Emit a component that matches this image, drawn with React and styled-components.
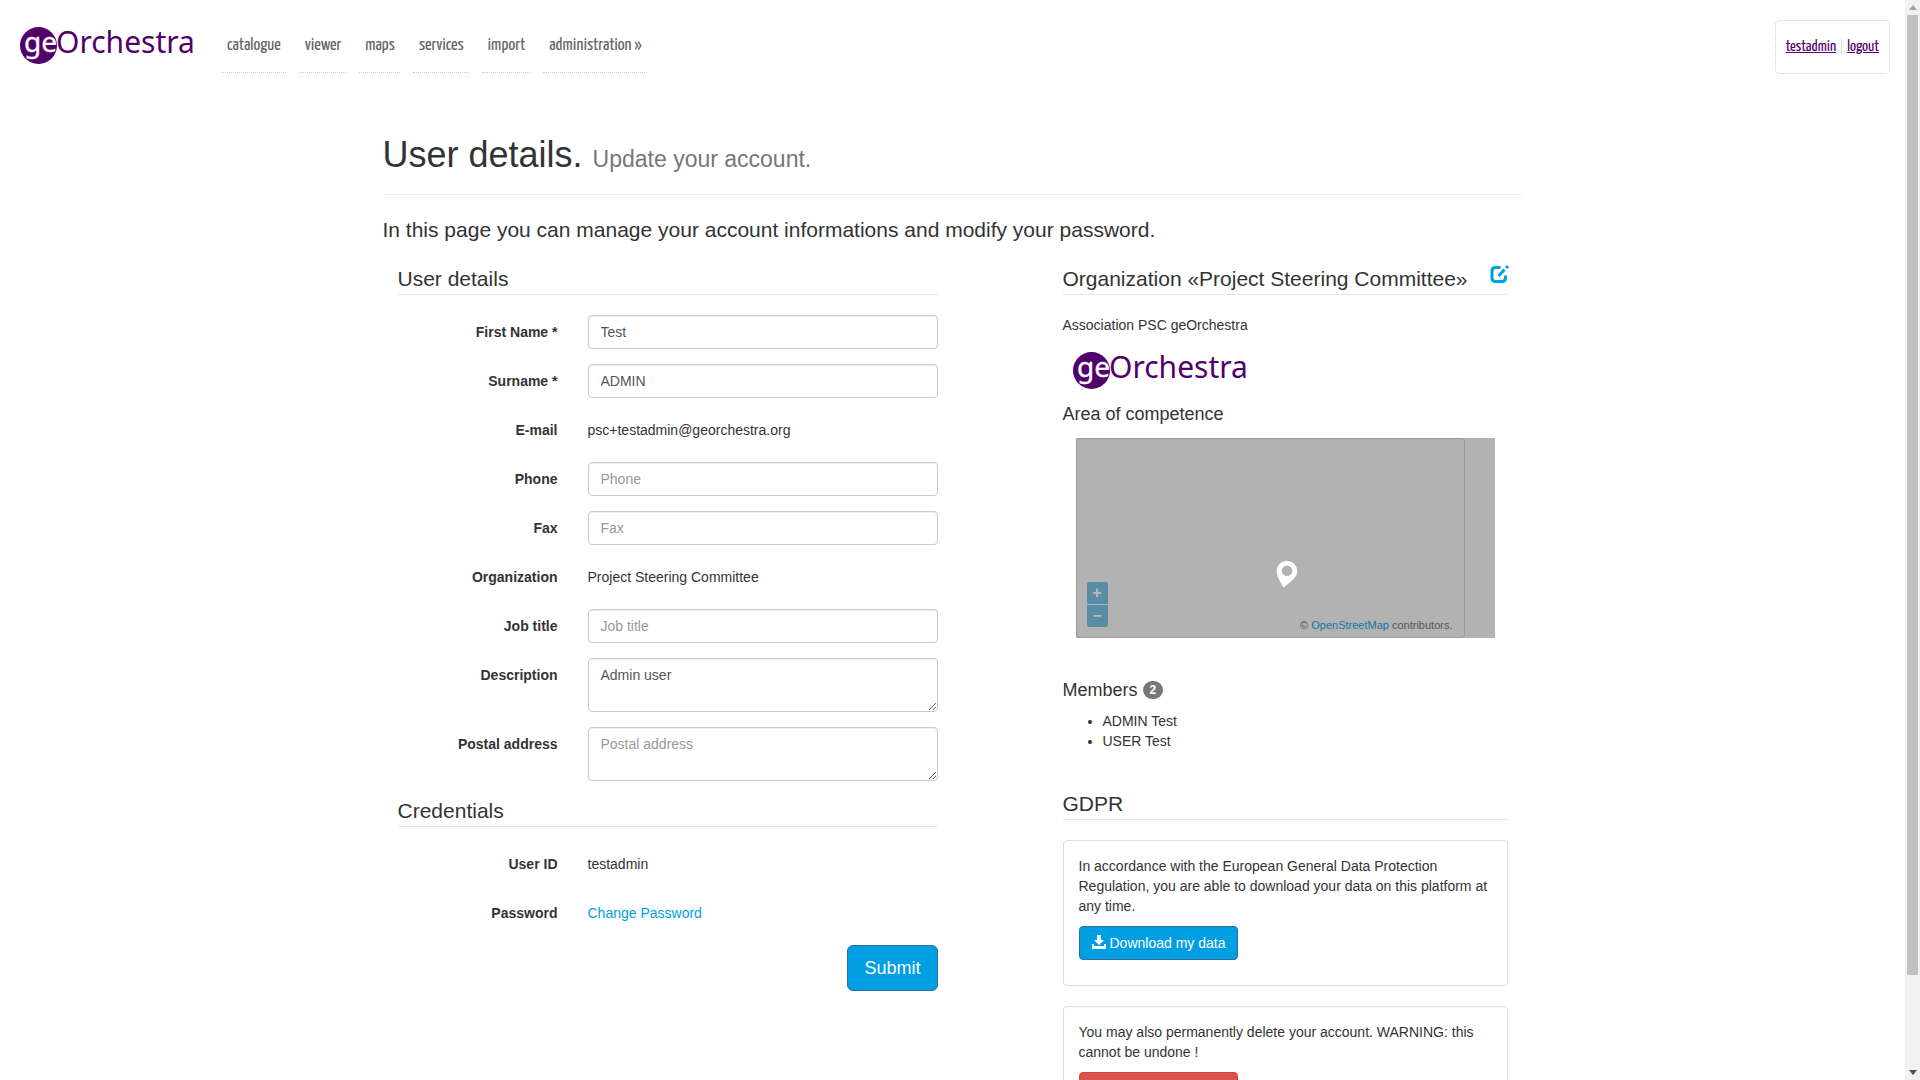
import React from "react";
import styled, { createGlobalStyle } from "styled-components";

const accent = "#009fe3";
const purple = "#52006b";
const narrow = '"Yanone Kaffeesatz", "Liberation Sans Narrow", "DejaVu Sans Condensed", sans-serif';

const GlobalStyle = createGlobalStyle`
  *, *::before, *::after { box-sizing: border-box; }
  body {
    margin: 0;
    font: 14px/20px "Liberation Sans", Arial, sans-serif;
    color: #333;
    background: #fff;
  }
  a { color: ${accent}; text-decoration: none; }
  input, textarea, button { font-family: inherit; }
`;

const Shell = styled.div`
  display: grid;
  grid-template-columns: minmax(0, 1fr) 15px;
  height: 100vh;
`;

const Page = styled.div`
  overflow-y: auto;
  scrollbar-width: none;
`;

const Track = styled.div`
  display: flex;
  flex-direction: column;
  align-items: center;
  gap: 4px;
  padding: 5px 0;
  background: #f1f1f1;
`;

const Rail = styled.div`
  display: grid;
  grid-template-rows: 32fr 3fr;
  flex: 1;
  width: 11px;
`;

const Thumb = styled.div`
  background: #c1c1c1;
`;

const Arrow = styled.svg`
  display: block;
  width: 8px;
  height: 6px;
  fill: ${(p) => p.$color};
`;

const Header = styled.header`
  display: flex;
  align-items: flex-start;
  justify-content: space-between;
  padding: 20px 15px 0 20px;
  height: 95px;
`;

const HeaderLeft = styled.div`
  display: flex;
  align-items: flex-start;
  gap: 25px;
`;

const LogoSvg = styled.svg`
  display: block;
  width: 176px;
  height: 49px;
`;

const Nav = styled.nav`
  display: flex;
  gap: 13px;
`;

const NavLink = styled.a`
  padding: 16px 5px 16px 6px;
  border-bottom: 1px dotted #ccc;
  font: 18px/20px ${narrow};
  color: #666;
`;

const Session = styled.p`
  display: flex;
  align-items: center;
  gap: 5px;
  height: 54px;
  margin: 0;
  padding: 0 10px;
  border: 1px dotted #ccc;
  border-radius: 5px;
  font: 16px/16px ${narrow};
`;

const SessionLink = styled.a`
  color: ${purple};
  text-decoration: underline;
`;

const Divider = styled.span`
  width: 1px;
  height: 16px;
  background: #ddd;
`;

const Container = styled.main`
  max-width: 1140px;
  margin: 0 auto;
  padding: 40px 0 20px;
`;

const Title = styled.h1`
  margin: 0 0 20px;
  padding-bottom: 19px;
  border-bottom: 1px solid #eee;
  font-size: 36px;
  line-height: 40px;
  font-weight: normal;
`;

const Small = styled.small`
  font-size: 23px;
  line-height: 1;
  color: #777;
`;

const Lead = styled.p`
  margin: 0 0 20px;
  font-size: 21px;
  line-height: 29px;
`;

const Columns = styled.div`
  display: grid;
  grid-template-columns: 6fr 5fr;
  column-gap: 95px;
  align-items: start;
`;

const Column = styled.section`
  padding: 0 15px;
`;

const Legend = styled.h2`
  display: flex;
  justify-content: space-between;
  margin: 0 0 20px;
  border-bottom: 1px solid #e5e5e5;
  font-size: 21px;
  line-height: 30px;
  font-weight: normal;
`;

const Row = styled.div`
  display: grid;
  grid-template-columns: 160px minmax(0, 1fr);
  column-gap: 30px;
  margin-bottom: 15px;
`;

const labelText = `
  padding-top: 7px;
  text-align: right;
  font-weight: bold;
`;

const Label = styled.label`${labelText}`;
const Term = styled.span`${labelText}`;

const Value = styled.div`
  min-height: 34px;
  padding: 7px 0;
`;

const Input = styled.input`
  display: block;
  width: 100%;
  height: ${(p) => (p.$tall ? 54 : 34)}px;
  padding: 6px 12px;
  border: 1px solid #ccc;
  border-radius: 4px;
  box-shadow: inset 0 1px 1px rgba(0, 0, 0, 0.075);
  background: #fff;
  color: #555;
  font-size: 14px;
  line-height: 20px;
  &::placeholder { color: #999; opacity: 1; }
`;

const Actions = styled.div`
  display: flex;
  justify-content: flex-end;
`;

const Button = styled.button`
  padding: ${(p) => (p.$large ? "10px 16px" : "6px 12px")};
  border: 1px solid ${(p) => (p.$danger ? "#d43f3a" : "#2e6da4")};
  border-radius: ${(p) => (p.$large ? 6 : 4)}px;
  background: ${(p) => (p.$danger ? "#d9534f" : accent)};
  color: #fff;
  font-size: ${(p) => (p.$large ? 18 : 14)}px;
  line-height: ${(p) => (p.$large ? 24 : 20)}px;
  cursor: pointer;
`;

const ButtonIcon = styled.svg`
  width: 14px;
  height: 14px;
  margin-right: 4px;
  vertical-align: -1px;
  fill: currentColor;
`;

const EditLink = styled.a`
  line-height: 0;
  svg { width: 19px; height: 19px; overflow: visible; }
`;

const OrgLogo = styled.div`
  padding-left: 10px;
`;

const Paragraph = styled.p`
  margin: 0 0 10px;
`;

const SubHeading = styled.h3`
  display: flex;
  align-items: center;
  gap: 5px;
  margin: 10px 0 11px;
  font-size: 18px;
  line-height: 20px;
  font-weight: normal;
`;

const Badge = styled.span`
  padding: 3px 7px;
  border-radius: 10px;
  background: #777;
  color: #fff;
  font-size: 12px;
  line-height: 12px;
  font-weight: bold;
`;

const MapBox = styled.div`
  position: relative;
  height: 200px;
  margin: 14px 13px 42px;
  background: #b2b2b2;
`;

const MapFrame = styled.div`
  display: flex;
  align-items: flex-end;
  justify-content: space-between;
  width: 389px;
  max-width: 100%;
  height: 100%;
  padding: 10px;
  border: 1px solid #999;
  border-radius: 4px;
`;

const Zoom = styled.div`
  display: grid;
  gap: 1px;
`;

const ZoomButton = styled.button`
  width: 21px;
  height: 22px;
  padding: 0;
  border: 0;
  border-radius: ${(p) => (p.$top ? "2px 2px 0 0" : "0 0 2px 2px")};
  background: #5b8ca6;
  color: #bbb;
  font-size: 16px;
  line-height: 20px;
  font-weight: bold;
`;

const Credit = styled.span`
  margin: 0 1px -6px 0;
  font-size: 11px;
  line-height: 16px;
  color: #555;
  a { color: #1575a3; }
`;

const Pin = styled.svg`
  position: absolute;
  left: 50%;
  top: 122px;
  width: 22px;
  height: 28px;
  margin-left: -9px;
  fill: #fff;
`;

const Members = styled.ul`
  margin: 0 0 38px;
  padding-left: 40px;
`;

const Panel = styled.div`
  margin-bottom: 20px;
  padding: 15px 15px 25px;
  border: 1px solid #ddd;
  border-radius: 4px;
  box-shadow: 0 1px 1px rgba(0, 0, 0, 0.05);
`;

function Logo() {
  return (
    <LogoSvg viewBox="0 0 176 49" role="img" aria-label="geOrchestra">
      <circle cx="18.5" cy="25.5" r="18.5" fill={purple} />
      <text x="4" y="32" fontFamily="Noto Sans, sans-serif" fontSize="28" fill="#fff" stroke="#fff" strokeWidth="0.3">ge</text>
      <text x="36" y="33" fontFamily="Noto Sans, sans-serif" fontSize="30" fill={purple}>Orchestra</text>
    </LogoSvg>
  );
}

const links = ["catalogue", "viewer", "maps", "services", "import", "administration »"];

function Field({ id, label, value, area, hint }) {
  return (
    <Row>
      <Label htmlFor={id}>{label}</Label>
      <Input id={id} as={area ? "textarea" : undefined} $tall={area} defaultValue={value} placeholder={hint} />
    </Row>
  );
}

function Fact({ label, children }) {
  return (
    <Row>
      <Term>{label}</Term>
      <Value>{children}</Value>
    </Row>
  );
}

export default function App() {
  return (
    <Shell>
      <GlobalStyle />
      <Page>
        <Header>
          <HeaderLeft>
            <Logo />
            <Nav>
              {links.map((l) => <NavLink href="#" key={l}>{l}</NavLink>)}
            </Nav>
          </HeaderLeft>
          <Session>
            <SessionLink href="#">testadmin</SessionLink>
            <Divider />
            <SessionLink href="#">logout</SessionLink>
          </Session>
        </Header>
        <Container>
          <Title>User details. <Small>Update your account.</Small></Title>
          <Lead>In this page you can manage your account informations and modify your password.</Lead>
          <Columns>
            <Column>
              <Legend>User details</Legend>
              <Field id="first" label="First Name *" value="Test" />
              <Field id="surname" label="Surname *" value="ADMIN" />
              <Fact label="E-mail">psc+testadmin@georchestra.org</Fact>
              <Field id="phone" label="Phone" hint="Phone" />
              <Field id="fax" label="Fax" hint="Fax" />
              <Fact label="Organization">Project Steering Committee</Fact>
              <Field id="job" label="Job title" hint="Job title" />
              <Field id="description" label="Description" value="Admin user" area />
              <Field id="address" label="Postal address" hint="Postal address" area />
              <Legend>Credentials</Legend>
              <Fact label="User ID">testadmin</Fact>
              <Fact label="Password"><a href="#">Change Password</a></Fact>
              <Actions><Button $large>Submit</Button></Actions>
            </Column>
            <Column>
              <Legend>
                Organization «Project Steering Committee»
                <EditLink href="#" aria-label="Edit organization">
                  <svg viewBox="0 0 19 19" fill="none" stroke={accent}>
                    <path d="M11.500 3.500H6.500Q3 3.500 3 7V14Q3 17.500 6.500 17.500H13Q16.500 17.500 16.500 14V11.500" strokeWidth="3" />
                    <path d="M9.500 12L15.500 5.500M17 4L19 2" strokeWidth="3" />
                  </svg>
                </EditLink>
              </Legend>
              <Paragraph>Association PSC geOrchestra</Paragraph>
              <OrgLogo><Logo /></OrgLogo>
              <SubHeading>Area of competence</SubHeading>
              <MapBox>
                <MapFrame>
                  <Zoom>
                    <ZoomButton $top aria-label="Zoom in">+</ZoomButton>
                    <ZoomButton aria-label="Zoom out">−</ZoomButton>
                  </Zoom>
                  <Credit>© <a href="#">OpenStreetMap</a> contributors.</Credit>
                </MapFrame>
                <Pin viewBox="0 0 22 28">
                  <path fillRule="evenodd" d="M11 1C5 1 .7 5.500.7 11.500C.7 17 5 22.500 7.500 27.500C13 23 21.300 17.500 21.300 11.500C21.300 5.500 17 1 11 1ZM11 5.500A5.200 5.200 0 1 1 11 16A5.200 5.200 0 1 1 11 5.500Z" />
                </Pin>
              </MapBox>
              <SubHeading>Members <Badge>2</Badge></SubHeading>
              <Members>
                <li>ADMIN Test</li>
                <li>USER Test</li>
              </Members>
              <Legend>GDPR</Legend>
              <Panel>
                <Paragraph>
                  In accordance with the European General Data Protection Regulation, you are able to
                  download your data on this platform at any time.
                </Paragraph>
                <Button>
                  <ButtonIcon viewBox="0 0 14 14"><path d="M5 0h4v5h3L7 10 2 5h3zM0 9h2v2h10V9h2v5H0z" /></ButtonIcon>
                  Download my data
                </Button>
              </Panel>
              <Panel>
                <Paragraph>
                  You may also permanently delete your account. WARNING: this cannot be undone !
                </Paragraph>
                <Button $danger>
                  <ButtonIcon viewBox="0 0 14 14"><path d="M1 2h4V0h4v2h4v2H1zM2 5h10v9H2z" /></ButtonIcon>
                  Delete my account
                </Button>
              </Panel>
            </Column>
          </Columns>
        </Container>
      </Page>
      <Track aria-hidden="true">
        <Arrow $color="#a3a3a3" viewBox="0 0 8 6"><path d="M4 0L8 5H0z" /></Arrow>
        <Rail><Thumb /></Rail>
        <Arrow $color="#505050" viewBox="0 0 8 6"><path d="M0 1H8L4 6z" /></Arrow>
      </Track>
    </Shell>
  );
}
